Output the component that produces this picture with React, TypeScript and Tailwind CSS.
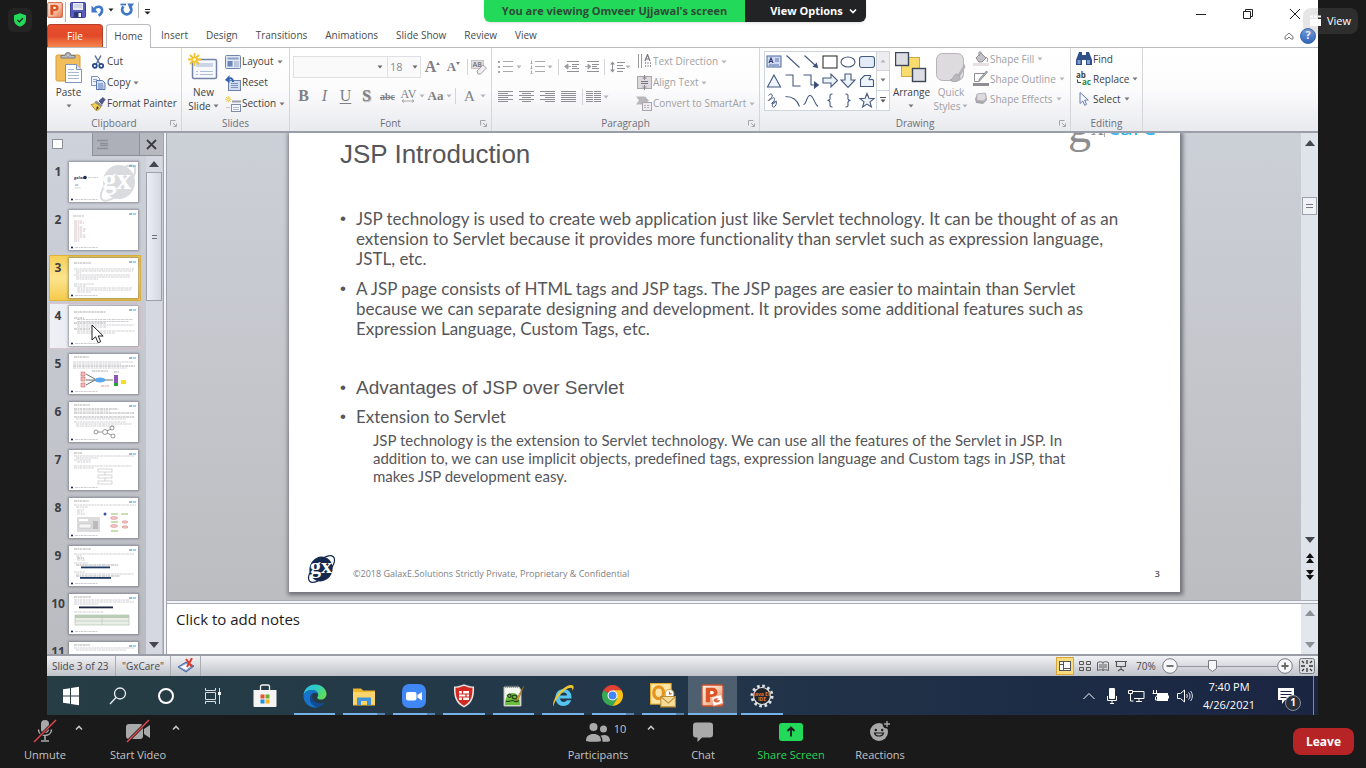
import type { ReactNode } from "react";

/* ---------- small shared pieces ---------- */

function Caret({ className = "text-[#777]" }: { className?: string }) {
  return (
    <svg width="6" height="4" viewBox="0 0 6 4" className={"shrink-0 " + className} aria-hidden="true">
      <path d="M0.5 0.5h5L3 3.5z" fill="currentColor" />
    </svg>
  );
}

function Chevron({ up = false }: { up?: boolean }) {
  return (
    <svg width="8" height="6" viewBox="0 0 8 6" fill="none" stroke="currentColor" strokeWidth="1.6" aria-hidden="true">
      <path d={up ? "M1 4.5L4 1.5L7 4.5" : "M1 1.5L4 4.5L7 1.5"} />
    </svg>
  );
}

function Svg({ w = 16, h = 16, children }: { w?: number; h?: number; children: ReactNode }) {
  return (
    <svg width={w} height={h} viewBox={`0 0 ${w} ${h}`} fill="none" className="shrink-0" aria-hidden="true">
      {children}
    </svg>
  );
}

function Sep({ className = "h-4" }: { className?: string }) {
  return <div className={"w-px shrink-0 bg-[#d4d5d9] " + className} />;
}

/* ---------- title bar ---------- */

const PptIcon = ({ size = 16 }: { size?: number }) => (
  <svg width={size} height={size} viewBox="0 0 24 24" className="shrink-0" aria-hidden="true">
    <defs>
      <linearGradient id="ppt" x1="0" y1="0" x2="1" y2="1">
        <stop offset="0" stopColor="#fdf0e8" />
        <stop offset="0.5" stopColor="#f7c9b0" />
        <stop offset="1" stopColor="#e8754a" />
      </linearGradient>
    </defs>
    <rect x="1" y="1" width="22" height="22" rx="1.5" fill="url(#ppt)" stroke="#c9502c" strokeWidth="1.4" />
    <path d="M5 4h7.5a4.6 4.6 0 0 1 0 9.600H9.600V19H5z" fill="#dc5423" />
    <path d="M9.600 7.200h2a1.700 1.700 0 0 1 0 3.400h-2z" fill="#fff" />
    {size > 16 && (
      <>
        <path d="M11 14l10-3 2 9-10 3z" fill="#fff" stroke="#e9a083" strokeWidth="0.700" />
        <ellipse cx="16.500" cy="17" rx="3.200" ry="2.200" fill="#d9603a" />
        <path d="M16 17l4-3v3z" fill="#fff" />
      </>
    )}
  </svg>
);

function TitleBar() {
  return (
    <div className="flex h-6 shrink-0 items-center bg-white pr-[17px]">
      <div className="flex w-[19px] items-center border-r border-[#b5b5b5] pb-1">
        <PptIcon />
      </div>
      <button aria-label="Save" className="ml-1 mb-1">
        <Svg>
          <rect x="0.500" y="0.500" width="15" height="15" rx="1" fill="#5a5fc0" stroke="#3a3f98" />
          <rect x="3" y="1" width="10" height="7" fill="#e9edf8" />
          <path d="M4 3h8M4 5h8" stroke="#b4bcdc" />
          <rect x="4" y="10" width="8" height="5.500" fill="#303a78" />
          <rect x="8.500" y="11" width="2.500" height="4" fill="#f4f6fc" />
        </Svg>
      </button>
      <button aria-label="Undo" className="ml-[5px] mb-1">
        <Svg w={14} h={14}>
          <path d="M3 6.500C6 2 12 3.500 11 8c-.3 2-1.500 3.500-3.500 4.500" stroke="#3f78c8" strokeWidth="2.600" />
          <path d="M0.500 2.500v7H7z" fill="#3f78c8" />
        </Svg>
      </button>
      <span className="ml-[3px] mb-1"><Caret className="text-[#222]" /></span>
      <button aria-label="Redo" className="ml-[6px] mb-1">
        <Svg w={14} h={14}>
          <path d="M3.500 3.500A4.600 4.600 0 1 0 10.500 4" stroke="#3f78c8" strokeWidth="2.800" />
          <path d="M7.500 0.500h6.500l-4 6z" fill="#3f78c8" />
          <path d="M0.500 1.500h5.500" stroke="#3f78c8" strokeWidth="1.800" />
        </Svg>
      </button>
      <div className="ml-1 mb-1 h-4 w-px bg-[#b5b5b5]" />
      <button aria-label="Customize toolbar" className="ml-[5px]">
        <Svg w={7} h={6}><path d="M1 0.500h5" stroke="#222" /><path d="M0.500 2.500h6L3.500 5.500z" fill="#222" /></Svg>
      </button>
      <div className="ml-auto flex items-center gap-[35px] pt-1">
        <button aria-label="Minimize"><Svg w={12} h={12}><path d="M1 6.500h10" stroke="#222" /></Svg></button>
        <button aria-label="Restore"><Svg w={12} h={12}><path d="M1.500 3.500h7v7h-7zM3.500 3.500v-2h7v7h-2" stroke="#222" /></Svg></button>
        <button aria-label="Close"><Svg w={12} h={12}><path d="M1 1l10 10M11 1L1 11" stroke="#222" /></Svg></button>
      </div>
    </div>
  );
}

const TABS = ["Insert", "Design", "Transitions", "Animations", "Slide Show", "Review", "View"];

function TabBar() {
  return (
    <nav className="flex h-6 shrink-0 items-stretch border-b border-[#b9bbc0] bg-white text-[10px] text-[#4a4a4a]">
      <button className="w-14 rounded-t-sm border border-b-0 border-[#b7402a] bg-gradient-to-b from-[#e8502e] via-[#e2492a] to-[#f4854c] text-white">
        File
      </button>
      <button className="-mb-px ml-[3px] w-[45px] rounded-t-sm border border-b-0 border-[#b9bbc0] bg-white">Home</button>
      <div className="ml-[10px] flex items-center gap-[18px]">
        {TABS.map((t) => (
          <button key={t}>{t}</button>
        ))}
      </div>
      <div className="ml-auto flex items-center gap-[6px] pr-[2px]">
        <button aria-label="Collapse ribbon">
          <Svg w={10} h={8}><path d="M1 4.500L5 1l4 3.500V7H7L5 5 3 7H1z" stroke="#777" /></Svg>
        </button>
        <button aria-label="Help" className="flex size-4 items-center justify-center rounded-full border border-[#2f5fa8] bg-gradient-to-b from-[#6d9ae0] to-[#3565b8] text-[11px] font-bold text-white">
          ?
        </button>
      </div>
    </nav>
  );
}

/* ---------- ribbon ---------- */

function Launcher() {
  return (
    <button aria-label="More options" className="absolute right-1 bottom-1">
      <Svg w={7} h={7}><path d="M0.500 5.500v-5h5M3 3l3 3M6.500 3.500v3h-3" stroke="#a4a6ab" /></Svg>
    </button>
  );
}

function Group({ label, className, launcher = true, children }: { label: string; className: string; launcher?: boolean; children: ReactNode }) {
  return (
    <section className={"relative flex shrink-0 flex-col border-r border-[#d5d6da] " + className}>
      <div className="flex min-h-0 flex-1">{children}</div>
      <h2 className="h-4 text-center text-[10px] leading-4 text-[#6c6f78]">{label}</h2>
      {launcher && <Launcher />}
    </section>
  );
}

function Row({ icon, label, caret = false, off = false }: { icon: ReactNode; label: string; caret?: boolean; off?: boolean }) {
  return (
    <button className={"flex items-center gap-px whitespace-nowrap " + (off ? "text-[#a0a0a3]" : "text-[#3f3f42]")}>
      <span className="flex w-4 justify-center">{icon}</span>
      <span>{label}</span>
      {caret && <span className="ml-[2px]"><Caret className={off ? "text-[#b5b5b8]" : "text-[#777]"} /></span>}
    </button>
  );
}

const PasteIcon = () => (
  <Svg w={28} h={32}>
    <rect x="1" y="3" width="24" height="26" rx="1.500" fill="#f2be5c" stroke="#d79c3c" />
    <path d="M6 6V3.500h4a3 3 0 0 1 6 0h4V6z" fill="#b9bcc2" stroke="#777b84" />
    <circle cx="13" cy="3" r="1.300" fill="#fff" stroke="#777b84" strokeWidth="0.700" />
    <path d="M10.500 12.500h11l5 5v13h-16z" fill="#fff" stroke="#7f93b8" />
    <path d="M21.500 12.500v5h5" fill="#dbe3f0" stroke="#7f93b8" />
    <path d="M13 17.500h6M13 20.500h11M13 23.500h11M13 26.500h11" stroke="#a9b7d2" />
  </Svg>
);
const CutIcon = () => (
  <Svg w={14} h={14}>
    <path d="M4 0.500L8.800 9M10 0.500L5.200 9" stroke="#5a6f98" strokeWidth="1.500" />
    <circle cx="3.800" cy="10.800" r="2" stroke="#27488f" strokeWidth="1.700" />
    <circle cx="10.200" cy="10.800" r="2" stroke="#27488f" strokeWidth="1.700" />
  </Svg>
);
const CopyIcon = () => (
  <Svg w={16} h={14}>
    <path d="M1.500 0.500h6l2 2v7h-8z" fill="#f0f5fd" stroke="#7d93bf" />
    <path d="M3 3.500h4M3 5.500h5" stroke="#8fa6d0" />
    <path d="M6.500 4.500h6l2.500 2.500v6.500H6.500z" fill="#d4e2f8" stroke="#5877b0" />
    <path d="M8 8h5M8 10h5.500M8 12h5.500" stroke="#5877b0" />
  </Svg>
);
const PainterIcon = () => (
  <Svg w={16} h={14}>
    <path d="M9 4l4-3.500 2 2L12 7z" fill="#53588a" stroke="#33375f" strokeWidth="0.700" />
    <path d="M6 3.500l7 4.500-2 2-6.500-4z" fill="#8a8fa6" />
    <path d="M5 5.500l6 4.500c-1 2-3 3.500-5 3.500L1 7.500C2.500 7.500 4 7 5 5.500z" fill="#f4cf55" stroke="#a58529" strokeWidth="0.800" />
    <path d="M7 9l2 2-3 2z" fill="#3f3a2a" />
  </Svg>
);
const Spark = () => (
  <g stroke="#f0c22e" strokeWidth="1.800"><path d="M6.500 0v13M0 6.500h13M2 2l9 9M11 2l-9 9" /><circle cx="6.500" cy="6.500" r="1.600" fill="#fff6c8" stroke="none" /></g>
);
const NewSlideIcon = () => (
  <Svg w={30} h={28}>
    <rect x="4.500" y="6.500" width="24" height="19" rx="1.500" fill="#f7f9fd" stroke="#7484a8" strokeWidth="1.500" />
    <rect x="8" y="10" width="17" height="4" fill="#ccd5e8" />
    <path d="M8 18.500h2M12 18.500h13M8 21.500h2M12 21.500h13" stroke="#b0bbd4" />
    <Spark />
  </Svg>
);
const LayoutIcon = () => (
  <Svg w={16} h={14}>
    <rect x="0.500" y="0.500" width="15" height="13" rx="1" fill="#dfe7f5" stroke="#7484a8" />
    <rect x="2.500" y="2.500" width="11" height="2" fill="#8da0c6" />
    <rect x="2.500" y="6" width="5" height="5.500" fill="#6b86bb" />
    <path d="M9 7h5M9 9h5M9 11h5" stroke="#97a6c6" />
  </Svg>
);
const ResetIcon = () => (
  <Svg w={16} h={16}>
    <rect x="3.500" y="5.500" width="12" height="10" fill="#cfdbf0" stroke="#6f82ab" />
    <path d="M6 8.500h7M6 10.500h7M6 12.500h7" stroke="#7f93bd" />
    <path d="M8 7C8 3 5 2.500 3.500 4" stroke="#2f63b5" strokeWidth="2" />
    <path d="M0 5l4.500-5v8z" fill="#2f63b5" />
  </Svg>
);
const SectionIcon = () => (
  <Svg w={16} h={16}>
    <g transform="scale(0.500)"><Spark /></g>
    <path d="M7 5.500h9" stroke="#9aa0ad" strokeWidth="2" />
    <rect x="6.500" y="8.500" width="9" height="7" fill="#f4f6fb" stroke="#7f8cab" />
    <path d="M8 11.500h6M8 13.500h6" stroke="#b0bbd4" />
    <path d="M1 11.500h4" stroke="#c2c6cf" />
  </Svg>
);

function BigButton({ icon, lines, off = false, caretBelow = false }: { icon: ReactNode; lines: string[]; off?: boolean; caretBelow?: boolean }) {
  return (
    <button className={"flex flex-col items-center pt-1 leading-[14px] " + (off ? "text-[#a0a0a3]" : "text-[#3f3f42]")}>
      <span className="flex h-8 items-start">{icon}</span>
      <span className="mt-px">{lines[0]}</span>
      {caretBelow ? (
        <span className="flex h-[14px] items-center"><Caret /></span>
      ) : (
        <span className="flex items-center gap-[2px]">{lines[1]}<Caret className={off ? "text-[#b5b5b8]" : "text-[#777]"} /></span>
      )}
    </button>
  );
}

function Lines({ rows, w = 14 }: { rows: [number, number][]; w?: number }) {
  return (
    <Svg w={w} h={12}>
      {rows.map(([a, b], i) => (
        <path key={i} d={`M${a} ${i * 2 + 0.5}H${b}`} stroke="#8f8f94" />
      ))}
    </Svg>
  );
}

const BulletsIcon = ({ num = false }: { num?: boolean }) => (
  <Svg w={15} h={14}>
    {[2, 7, 12].map((y) => (
      <g key={y}>
        {num ? <path d={`M1.500 ${y - 1.5}v3M0.500 ${y + 1.5}h2`} stroke="#a8a8ad" /> : <rect x="0" y={y - 1} width="2" height="2" fill="#a8a8ad" />}
        <path d={`M5 ${y - 0.5}h10`} stroke="#a8a8ad" />
      </g>
    ))}
  </Svg>
);
const IndentIcon = ({ flip = false }: { flip?: boolean }) => (
  <Svg w={15} h={12}>
    <path d="M3 0.500h12M8 3.500h7M8 5.500h5M8 7.500h7M3 10.500h12" stroke="#8f8f94" />
    <path d={flip ? "M1 5.500h3M4 3v5l3-2.500z" : "M7 5.500H4M4 3v5L0.500 5.500z"} stroke="#9b9ba0" fill="#9b9ba0" strokeWidth="0.800" />
  </Svg>
);
const SpacingIcon = () => (
  <Svg w={15} h={12}>
    <path d="M2.500 2v8" stroke="#8f8f94" />
    <path d="M0 3.500L2.500 0.500L5 3.500zM0 8.500L2.500 11.500L5 8.500z" fill="#8f8f94" />
    <path d="M7 1.500h8M7 4.500h6M7 7.500h8M7 10.500h6" stroke="#8f8f94" />
  </Svg>
);
const TextDirIcon = () => (
  <Svg w={15} h={15}>
    <path d="M1.500 0v14M4.500 0v14" stroke="#9a9a9e" />
    <path d="M8 7l2.500-6.500L13 7M9 5h3" stroke="#77777b" strokeWidth="1.200" />
    <path d="M8.500 8v6M11 8v6M13.500 8v6" stroke="#9a9a9e" strokeDasharray="2 1" />
  </Svg>
);
const AlignTextIcon = () => (
  <Svg w={15} h={15}>
    <rect x="0.500" y="1.500" width="14" height="12" fill="#ded9de" stroke="#aaa6ab" />
    <path d="M4 6.500h7M4 8.500h7" stroke="#77757a" />
    <path d="M7.500 0v5M7.500 10v5M5.500 3h4M5.500 12h4" stroke="#8b898e" />
  </Svg>
);
const SmartArtIcon = () => (
  <Svg w={16} h={15}>
    <path d="M0 0.500h9l4 4-4 4H0l3-4z" fill="#b9b7bb" />
    <rect x="6.500" y="6.500" width="9" height="8" fill="#eceaed" stroke="#a9a6ab" />
    <path d="M8 9.500h6M8 11.500h6" stroke="#b5b3b8" strokeDasharray="2 1" />
  </Svg>
);

const SHAPES: ReactNode[] = [
  <><rect x="0.500" y="2.500" width="14" height="11" fill="#cfdaf0" stroke="#5d74a8" /><path d="M2.500 9.500l2-5 2 5M3.500 8h2" stroke="#27386b" /><path d="M8.500 5.500h4M8.500 7.500h4M2.500 11.500h10" stroke="#5d74a8" /></>,
  <path d="M1 2l13 12" />,
  <><path d="M1 2l12 11" /><path d="M14 14l-4-1 3-3z" fill="#2b4470" /></>,
  <rect x="0.500" y="2.500" width="14" height="12" fill="#fff" stroke="#333" />,
  <ellipse cx="7.500" cy="8.500" rx="7" ry="5" fill="#fff" />,
  <rect x="0" y="3" width="15" height="11" rx="2.500" fill="#e2ebf7" />,
  <path d="M7.500 2.500l6.500 12H1z" fill="#eef4fb" />,
  <path d="M0 2.500h7.500v11H15" />,
  <><path d="M0 2.500h7.500v10H13" /><path d="M11 9.500l4 3-4 3z" fill="#2b4470" /></>,
  <path d="M0.500 5.500h8v-4l6.500 6.500-6.500 6.500v-4h-8z" fill="#eef4fb" />,
  <path d="M4.500 1.500h6v6h4L7.500 15 0.500 7.500h4z" fill="#eef4fb" />,
  <path d="M1 14V7l4-4h6c1 2-2 2-1.500 4 1.500 1 3-1.500 4.500 1v6z" fill="#eef4fb" />,
  <path d="M2 3c4-4 5 1 2 3s-3 3 0 1 4-3 4 0-5 4-2 4 4-4 4-1-3 6-4 4 1-5 4-5" strokeWidth="1" />,
  <path d="M0 4c8 0 12 4 14 10" />,
  <path d="M0 12c3 0 3-9 6.500-9s4 8 8 11" />,
  <path d="M10 1.500c-4 0-2 3-2.500 5-.3 1-1.500 1.500-2.500 1.500 1 0 2.200.5 2.500 1.500.5 2-1.500 5 2.500 5" />,
  <path d="M5 1.500c4 0 2 3 2.500 5 .3 1 1.500 1.500 2.500 1.500-1 0-2.200.5-2.500 1.500-.5 2 1.500 5-2.500 5" />,
  <path d="M7.500 1l1.900 4.800 5.100.3-4 3.300 1.400 5-4.400-2.800-4.400 2.800 1.400-5-4-3.300 5.100-.3z" fill="#eef4fb" />,
];

const ArrangeIcon = () => (
  <Svg w={32} h={32}>
    <rect x="6.500" y="5.500" width="18" height="19" fill="#f8dd6e" stroke="#d1a83e" />
    <rect x="0.500" y="0.500" width="13" height="13" fill="#dcdee3" stroke="#3c4458" strokeWidth="1.400" />
    <rect x="17.500" y="16.500" width="13" height="13" fill="#dcdee3" stroke="#3c4458" strokeWidth="1.400" />
  </Svg>
);
const QuickStylesIcon = () => (
  <Svg w={30} h={32}>
    <rect x="0.500" y="1.500" width="27" height="27" rx="6" fill="#dedbdf" stroke="#b6b3b8" />
    <path d="M28.500 12l-7 11 2 2 6-10z" fill="#b5b2b7" />
    <path d="M21 22c-4 0-3 5-7 6 3 3 10 2 10-3z" fill="#bbb8bd" stroke="#aaa7ac" />
  </Svg>
);
const FillIcon = () => (
  <Svg><path d="M3 7l5-5 5 5-4 4H6z" fill="#c3c1c6" stroke="#8f8d92" /><path d="M6 5V1h2v2M13 6c2 1 2 3 1 5" stroke="#8f8d92" /><rect x="0" y="12" width="16" height="3" fill="#e6e0e5" /></Svg>
);
const OutlineIcon = () => (
  <Svg><path d="M12 2.500H1.500v8H5" stroke="#8f8d92" /><path d="M14.500 1l-7 8-2 2 1-3 7-8z" fill="#bbb" stroke="#8f8d92" /><rect x="0" y="12" width="16" height="3" fill="#8f8d92" /></Svg>
);
const EffectsIcon = () => (
  <Svg><path d="M2 8l2-5 9-1 1 7-4 4-7-1z" fill="#a9a6ab" /><path d="M4 3l8-1 1 5-2 3-7-1z" fill="#dedbdf" stroke="#bcb9be" /></Svg>
);
const FindIcon = () => (
  <Svg><path d="M3 1h3v3h4V1h3l3 8v5h-6V9H6v5H0V9z" fill="#2f5088" /><path d="M1.500 9h3v4h-3zM11 9h3v4h-3z" fill="#7f9dd0" /></Svg>
);
const ReplaceIcon = () => (
  <Svg>
    <text x="0" y="7" fontSize="8" fontWeight="bold" fill="#444">ab</text>
    <text x="6" y="14" fontSize="8" fontWeight="bold" fill="#2f8a3a">ac</text>
    <path d="M1.500 8.500v3H5" stroke="#444" />
  </Svg>
);
const SelectIcon = () => (
  <Svg w={12} h={14}><path d="M2 0.500v11l2.800-2.500 1.900 4.300 1.900-.9-1.900-4.200 3.600-.2z" fill="#f4f7fd" stroke="#6a7fb0" /></Svg>
);

function Glyph({ children, size = "text-[16px]", className = "" }: { children: ReactNode; size?: string; className?: string }) {
  return (
    <button className={"flex w-[21px] shrink-0 items-center justify-center font-['Liberation_Serif',serif] text-[#808085] " + size + " " + className}>{children}</button>
  );
}

function Ribbon() {
  const light = "text-[#b5b5b8]";
  return (
    <div className="flex h-[85px] shrink-0 border-b-2 border-[#9a9ea8] bg-gradient-to-b from-white via-[#fcfcfd] to-[#e9eaee] text-[10px]">
      <Group label="Clipboard" className="w-[135px]">
        <div className="flex w-[43px] justify-center"><BigButton icon={<PasteIcon />} lines={["Paste"]} caretBelow /></div>
        <div className="grid grid-rows-3 pt-[3px] pb-px">
          <Row icon={<CutIcon />} label="Cut" />
          <Row icon={<CopyIcon />} label="Copy" caret />
          <Row icon={<PainterIcon />} label="Format Painter" />
        </div>
      </Group>
      <Group label="Slides" className="w-[108px]" launcher={false}>
        <div className="flex w-[43px] justify-center"><BigButton icon={<span className="pt-px"><NewSlideIcon /></span>} lines={["New", "Slide"]} /></div>
        <div className="grid grid-rows-3 pt-[3px] pb-px">
          <Row icon={<LayoutIcon />} label="Layout" caret />
          <Row icon={<ResetIcon />} label="Reset" />
          <Row icon={<SectionIcon />} label="Section" caret />
        </div>
      </Group>
      <Group label="Font" className="w-[202px]">
        <div className="flex w-full flex-col gap-2 pt-2 pl-[3px]">
          <div className="flex h-[22px] items-center">
            <div className="flex h-[22px] w-[95px] items-center justify-end border border-[#e0e0e4] bg-[#fafafb] pr-1"><Caret className="text-[#666]" /></div>
            <div className="-ml-px flex h-[22px] w-[34px] items-center justify-between border border-[#e0e0e4] bg-[#fafafb] px-[2px] text-[11px] text-[#8a8a8e]">18<Caret className="text-[#666]" /></div>
            <Glyph className="ml-px font-bold">A<span className="-mt-2"><svg width="4" height="3" viewBox="0 0 4 3"><path d="M0 3h4L2 0z" fill="#808085" /></svg></span></Glyph>
            <Glyph size="text-[13px]" className="font-bold">A<span className="-mt-2"><svg width="4" height="3" viewBox="0 0 4 3"><path d="M0 0h4L2 3z" fill="#808085" /></svg></span></Glyph>
            <Sep className="mx-[3px] h-4" />
            <button aria-label="Clear formatting">
              <Svg>
                <rect x="0.500" y="1.500" width="12" height="8" fill="#e3e0e5" stroke="#c6c3c8" />
                <text x="1.500" y="8" fontSize="7" fontWeight="bold" fill="#808085">AB</text>
                <path d="M6 12l6-6 3.500 3-6 6H7z" fill="#f1eef2" stroke="#a5a2a7" />
              </Svg>
            </button>
          </div>
          <div className="flex h-5 items-center">
            <Glyph className="font-bold">B</Glyph>
            <Glyph className="italic">I</Glyph>
            <Glyph className="underline underline-offset-2">U</Glyph>
            <Glyph className="font-bold [text-shadow:1px_1px_1px_#aaa]">S</Glyph>
            <Glyph size="text-[10px]" className="font-bold line-through">abc</Glyph>
            <Glyph size="text-[12px]">
              <span className="flex flex-col items-center leading-[9px]">AV<Svg w={14} h={4}><path d="M1 2h12M3 0.500L1 2l2 1.500M11 0.500L13 2l-2 1.500" stroke="#999" strokeWidth="0.800" /></Svg></span>
            </Glyph>
            <Caret className={light} />
            <Glyph size="text-[13px]" className="font-bold">Aa</Glyph>
            <Caret className={light} />
            <Sep className="mx-[3px] h-4" />
            <Glyph size="text-[15px]">A</Glyph>
            <Caret className={light} />
          </div>
        </div>
      </Group>
      <Group label="Paragraph" className="w-[268px]">
        <div className="flex w-[144px] flex-col gap-[16px] pt-3 pl-[6px]">
          <div className="flex h-[14px] items-center">
            <button aria-label="Bullets"><BulletsIcon /></button>
            <span className="mr-2 ml-[3px]"><Caret className={light} /></span>
            <button aria-label="Numbering"><BulletsIcon num /></button>
            <span className="ml-[2px]"><Caret className={light} /></span>
            <Sep className="mx-[5px] h-4" />
            <button aria-label="Decrease indent" className="mr-[5px]"><IndentIcon /></button>
            <button aria-label="Increase indent"><IndentIcon flip /></button>
            <Sep className="mx-[5px] h-4" />
            <button aria-label="Line spacing"><SpacingIcon /></button>
            <Caret className={light} />
          </div>
          <div className="flex h-[14px] items-center gap-[6px]">
            <button aria-label="Align left"><Lines w={15} rows={[[0, 15], [0, 10], [0, 15], [0, 10], [0, 15], [0, 10]]} /></button>
            <button aria-label="Center"><Lines w={15} rows={[[0, 15], [3, 12], [0, 15], [3, 12], [0, 15], [3, 12]]} /></button>
            <button aria-label="Align right"><Lines w={15} rows={[[0, 15], [5, 15], [0, 15], [5, 15], [0, 15], [5, 15]]} /></button>
            <button aria-label="Justify"><Lines w={15} rows={[[0, 15], [0, 15], [0, 15], [0, 15], [0, 15], [0, 15]]} /></button>
            <Sep />
            <button aria-label="Columns" className="-ml-[3px] flex gap-px"><Lines w={7} rows={[[0, 7], [0, 7], [0, 7], [0, 7], [0, 7], [0, 7]]} /><Lines w={7} rows={[[0, 7], [0, 7], [0, 7], [0, 7], [0, 7], [0, 7]]} /></button>
            <span className="-ml-1"><Caret className={light} /></span>
          </div>
        </div>
        <div className="grid grid-rows-3 pt-[3px] pb-px">
          <Row off icon={<TextDirIcon />} label="Text Direction" caret />
          <Row off icon={<AlignTextIcon />} label="Align Text" caret />
          <Row off icon={<SmartArtIcon />} label="Convert to SmartArt" caret />
        </div>
      </Group>
      <Group label="Drawing" className="w-[311px]">
        <div className="mt-[3px] ml-1 flex h-[60px] border border-[#cfd3da] bg-white">
          <div className="grid w-[111px] grid-cols-6 grid-rows-3 place-items-center">
            {SHAPES.map((s, i) => (
              <button key={i} aria-label={`Shape ${i + 1}`}>
                <svg width="16" height="17" viewBox="-0.500 0 16 16" fill="none" stroke="#44597f" strokeWidth="1.100" aria-hidden="true">{s}</svg>
              </button>
            ))}
          </div>
          <div className="grid w-[13px] grid-rows-3 divide-y divide-[#cfd3da] border-l border-[#cfd3da]">
            <button aria-label="Previous shapes" className="flex items-center justify-center bg-[#ededf0]"><span className="rotate-180"><Caret className={light} /></span></button>
            <button aria-label="Next shapes" className="flex items-center justify-center"><Caret /></button>
            <button aria-label="All shapes" className="flex flex-col items-center justify-center gap-px"><span className="h-px w-[6px] bg-[#555]" /><Caret className="text-[#555]" /></button>
          </div>
        </div>
        <div className="flex w-[43px] justify-center"><BigButton icon={<ArrangeIcon />} lines={["Arrange"]} caretBelow /></div>
        <div className="flex w-9 justify-center"><BigButton off icon={<QuickStylesIcon />} lines={["Quick", "Styles"]} /></div>
        <div className="ml-1 grid grid-rows-3 pt-px pb-[6px]">
          <Row off icon={<FillIcon />} label="Shape Fill" caret />
          <Row off icon={<OutlineIcon />} label="Shape Outline" caret />
          <Row off icon={<EffectsIcon />} label="Shape Effects" caret />
        </div>
      </Group>
      <Group label="Editing" className="w-[72px]" launcher={false}>
        <div className="ml-[5px] grid grid-rows-3 pt-px pb-[6px]">
          <Row icon={<FindIcon />} label="Find" />
          <Row icon={<ReplaceIcon />} label="Replace" caret />
          <Row icon={<SelectIcon />} label="Select" caret />
        </div>
      </Group>
    </div>
  );
}

/* ---------- slide thumbnails ---------- */

type Line = [number, number, number, string?];
const G = "#b9b9be";
const D = "#86868b";

function TextLines({ lines }: { lines: Line[] }) {
  return (
    <g strokeDasharray="3 0.600 1.500 0.500 2.400 0.700">
      {lines.map(([x, y, w, c], i) => (
        <path key={i} d={`M${x} ${y}h${w}`} stroke={c ?? G} strokeWidth="0.700" />
      ))}
    </g>
  );
}

const THUMBS: ReactNode[] = [
  <>
    <ellipse cx="50" cy="20" rx="16" ry="17" fill="#dadbdf" />
    <ellipse cx="49" cy="21" rx="23" ry="9" fill="none" stroke="#dadbdf" strokeWidth="2" transform="rotate(-46 49 21)" />
    <text x="33" y="27" fontSize="29" fontWeight="bold" fill="#fff" fontFamily="Liberation Serif">gx</text>
    <text x="5" y="17" fontSize="4" fontWeight="bold" fill="#35406b">galax</text>
    <circle cx="16" cy="15.500" r="1.800" fill="#1e2b5c" />
    <TextLines lines={[[19, 15.5, 10], [6, 23, 4, "#4d6fae"], [6, 26, 6]]} />
  </>,
  <TextLines lines={[[4, 6, 11, "#9a9aa0"], ...[11, 13, 15, 17, 19, 21, 23, 25, 27, 29, 31].map((y, i): Line => [5, y, [9, 10, 5, 9, 12, 11, 8, 11, 12, 6, 5][i], "#c9aeb6"])]} />,
  <TextLines lines={[[5, 5, 17, D], [5, 11, 60], [7, 13, 57], [7, 15, 5], [5, 17, 56], [7, 19, 54], [7, 21, 22], [5, 26, 20], [5, 28, 12], [8, 30, 55], [8, 32, 54], [8, 34, 14]]} />,
  <TextLines lines={[[5, 6, 32, D], [5, 12, 10, D], [8, 13.5, 56], [8, 15.5, 52], [5, 17, 32, D], [8, 19, 57], [8, 21, 30], [5, 23, 16, D], [8, 25, 58], [8, 27, 38]]} />,
  <>
    <TextLines lines={[[5, 3, 15, D], [4, 8, 60], [4, 10, 48], [4, 12, 62, D], [4, 14, 54]]} />
    <g fill="#f3b9b9" stroke="#c05a5a" strokeWidth="0.500"><rect x="12" y="18" width="4" height="4" /><rect x="12" y="23" width="4" height="4" /><rect x="12" y="29" width="4" height="4" /></g>
    <path d="M17 20l9 5M17 26h9M17 31l9-5M36 26h8" stroke="#333" strokeWidth="0.700" />
    <ellipse cx="31" cy="26" rx="5.500" ry="2.600" fill="#5aa9ee" />
    <rect x="45" y="21" width="4" height="8" fill="#8d55b5" /><rect x="45" y="29" width="4" height="3" fill="#22a830" /><rect x="52" y="26" width="5" height="4" fill="#f2e01e" />
    <TextLines lines={[[23, 17, 16, D], [32, 32, 8, "#d26a6a"], [45, 18, 5, D]]} />
  </>,
  <>
    <TextLines lines={[[5, 3, 16, D], [5, 7, 44, D], [5, 9, 36], [5, 11, 60, D], [5, 15, 61, D], [7, 17, 50], [5, 20, 52], [7, 22, 56], [7, 24, 40]]} />
    <g fill="none" stroke="#555" strokeWidth="0.600"><circle cx="27" cy="30" r="2" /><circle cx="36" cy="30" r="2.500" /><circle cx="43" cy="26" r="2" /><circle cx="44" cy="34" r="2" /><path d="M29 30h4M38 29l4-2M38 31l4 2" /></g>
  </>,
  <>
    <TextLines lines={[[5, 3, 8, D], [5, 6, 60], [7, 8, 22], [5, 10, 17], [8, 12, 14], [5, 16, 58], [5, 18, 20]]} />
    <g fill="#fff" stroke="#bbb" strokeWidth="0.600"><rect x="29" y="19" width="14" height="3" /><rect x="29" y="25" width="14" height="3" /><rect x="29" y="31" width="14" height="3" /><path d="M36 22v3M36 28v3" /></g>
  </>,
  <>
    <TextLines lines={[[5, 3, 15, D], [5, 7, 62], [7, 9, 12], [8, 12, 7], [8, 14, 6], [8, 16, 8]]} />
    <rect x="8" y="19" width="23" height="15" fill="#dcdcde" /><rect x="10" y="21" width="9" height="2" fill="#fff" /><rect x="10" y="26" width="12" height="4" fill="#f6f6f6" stroke="#aaa" strokeWidth="0.400" /><rect x="24" y="23" width="5" height="8" fill="#bbb" />
    <circle cx="36" cy="16" r="1.500" fill="#3d4fa8" />
    <g fill="#f3c9c9" stroke="#cf7777" strokeWidth="0.500"><ellipse cx="45" cy="20" rx="3.500" ry="1.400" /><ellipse cx="45" cy="28" rx="3.500" ry="1.400" /><ellipse cx="56" cy="24" rx="3" ry="1.200" /><ellipse cx="56" cy="29" rx="3" ry="1.200" /></g>
    <g stroke="#8ab354" strokeWidth="0.900"><path d="M42 16h7M52 16h7M42 24h7M42 33h7" /></g>
  </>,
  <>
    <TextLines lines={[[5, 3, 17, D], [5, 8, 60], [7, 10, 6], [8, 12, 7, D], [8, 14, 8], [5, 17, 14], [7, 19, 42, D], [5, 26, 11], [7, 28, 58], [7, 30, 44, D]]} />
    <rect x="12" y="20.500" width="29" height="1.800" fill="#1f3864" /><rect x="11" y="31" width="31" height="1.800" fill="#1f3864" />
  </>,
  <>
    <TextLines lines={[[5, 3, 17, D], [5, 6, 56], [5, 8, 60], [5, 10, 24], [5, 18, 30]]} />
    <rect x="10" y="12.500" width="34" height="1.800" fill="#1a2440" />
    <rect x="6" y="21" width="54" height="10" fill="#e9efe7" stroke="#a9bba6" strokeWidth="0.600" /><rect x="6" y="21" width="54" height="3" fill="#b9ccb6" /><path d="M33 21v10M6 27h54" stroke="#a9bba6" strokeWidth="0.500" />
  </>,
  <TextLines lines={[[5, 3, 16, D], [5, 6, 60], [7, 8, 50]]} />,
];

function Thumbnails() {
  return (
    <aside className="flex w-[116px] shrink-0 flex-col bg-gradient-to-b from-[#ced2da] to-[#b9bbc0]">
      <div className="flex h-[23px] shrink-0 items-stretch">
        <button aria-label="Slides" className="flex w-[45px] items-center pl-[5px]">
          <Svg w={12} h={11}><rect x="0.500" y="0.500" width="10" height="9" fill="#fff" stroke="#8d9098" /></Svg>
        </button>
        <button aria-label="Outline" className="flex w-[47px] items-center border-b border-l border-[#8d9098] bg-[#adb0b8] pl-1">
          <Svg w={12} h={11}><path d="M0 1.500h11M3 4.500h8M3 6.500h8M0 9.500h11" stroke="#8d9098" strokeWidth="1.400" /></Svg>
        </button>
        <button aria-label="Close pane" className="flex flex-1 items-center justify-center border-b border-l border-[#8d9098] bg-[#b6b9c0]">
          <Svg w={11} h={11}><path d="M1 1l9 9M10 1l-9 9" stroke="#3a3c42" strokeWidth="1.800" /></Svg>
        </button>
      </div>
      <div className="flex min-h-0 flex-1 pr-px">
        <ol className="min-w-0 flex-1 overflow-hidden pt-[2px] pr-[5px] pl-[2px]">
          {THUMBS.map((t, i) => (
            <li key={i} className="flex h-12 items-center">
              <button
                className={
                  "relative flex h-[46px] w-full items-center border pl-px " +
                  (i === 2
                    ? "border-[#e0b23a] bg-gradient-to-b from-[#f6cf58] via-[#fbe48c] to-[#f5cb4a]"
                    : i === 3
                      ? "border-[#d9c3cc] bg-gradient-to-r from-[#eff0f5] to-[#dcdde4]"
                      : "border-transparent")
                }
              >
                <span className="mr-1 mb-5 w-[14px] shrink-0 text-center text-[12px] leading-3 font-bold text-[#3d3f45]">{i + 1}</span>
                <span className="h-10 w-[69px] shrink-0 overflow-hidden bg-white shadow-[0_0_2px_1px_rgba(90,90,100,0.550)]">
                  <svg width="69" height="40" viewBox="0 0 69 40" aria-hidden="true">
                    {t}
                    <path d="M60 4h3" stroke="#999" strokeWidth="1.500" /><path d="M63.500 4h3.500" stroke="#58bdea" strokeWidth="1.200" />
                    <circle cx="3" cy="37.500" r="1.100" fill="#1e2b5c" />
                    <TextLines lines={[[6, 37.5, 23]]} />
                  </svg>
                </span>
                {i === 3 && (
                  <svg width="14" height="21" viewBox="0 0 14 21" className="absolute top-[20px] left-[41px]" aria-hidden="true">
                    <path d="M1 1v15l3.600-3.200 2.500 6 2.600-1.100-2.500-5.700h5z" fill="#fff" stroke="#222" />
                  </svg>
                )}
              </button>
            </li>
          ))}
        </ol>
        <div className="flex w-4 shrink-0 flex-col items-center bg-[#d5d8e0]">
          <span className="flex h-4 items-center"><Arrow up /></span>
          <div className="flex h-[129px] w-full items-center justify-center border border-[#9da1ab] bg-gradient-to-r from-[#eceef4] to-[#d4d8e2]">
            <span className="h-1 w-[5px] border-y border-[#6d7079]" />
          </div>
          <span className="mt-auto flex h-[18px] items-center"><Arrow /></span>
        </div>
      </div>
    </aside>
  );
}

/* ---------- slide ---------- */

function Bullet({ className = "", children }: { className?: string; children: ReactNode }) {
  return (
    <li className={"flex whitespace-nowrap " + className}>
      <span className="w-4 shrink-0 font-['Liberation_Sans',sans-serif]">•</span>
      <div>{children}</div>
    </li>
  );
}

const GxLogo = () => (
  <svg width="30" height="28" viewBox="0 0 30 28" aria-hidden="true">
    <ellipse cx="14" cy="14" rx="11.500" ry="12.500" fill="#15294f" transform="rotate(20 14 14)" />
    <ellipse cx="14.500" cy="14" rx="17" ry="7.500" fill="none" stroke="#15294f" strokeWidth="1.200" transform="rotate(-46 14.500 14)" />
    <text x="3" y="18" fontSize="22" fontWeight="bold" fill="#fff" fontFamily="Liberation Serif">gx</text>
  </svg>
);

function Slide() {
  return (
    <article className="relative flex flex-1 flex-col overflow-hidden bg-white pt-[5px] font-[Lato,sans-serif] text-[#56565a] [font-variant-ligatures:none]">
      <svg width="90" height="20" viewBox="0 0 90 20" className="absolute top-0 right-[22px]" aria-hidden="true">
        <text x="0" y="9" fontSize="46" fill="#8d8d90" fontFamily="Liberation Serif">g</text>
        <text x="23" y="2" fontSize="26" fill="#8d8d90" fontFamily="Liberation Serif">x</text>
        <path d="M36.500 0v4" stroke="#a8a8ab" />
        <text x="40" y="2" fontSize="24" fill="#29b3ee" fontFamily="Open Sans">care</text>
      </svg>
      <h1 className="pl-[51px] font-['Liberation_Sans',sans-serif] text-[26px] leading-8">JSP Introduction</h1>
      <ul className="mt-[39px] pl-[51px] text-[17px] leading-5">
        <Bullet>
          JSP technology is used to create web application just like Servlet technology. It can be thought of as an<br />
          extension to Servlet because it provides more functionality than servlet such as expression language,<br />
          JSTL, etc.
        </Bullet>
        <Bullet className="mt-[10px]">
          A JSP page consists of HTML tags and JSP tags. The JSP pages are easier to maintain than Servlet<br />
          because we can separate designing and development. It provides some additional features such as<br />
          Expression Language, Custom Tags, etc.
        </Bullet>
        <Bullet className="mt-[39px]"><span className="font-['Liberation_Sans',sans-serif] text-[19px]">Advantages of JSP over Servlet</span></Bullet>
        <Bullet className="mt-[9px]">Extension to Servlet</Bullet>
      </ul>
      <p className="mt-1 pl-[84px] text-[15px] leading-[18px] whitespace-nowrap">
        JSP technology is the extension to Servlet technology. We can use all the features of the Servlet in JSP. In<br />
        addition to, we can use implicit objects, predefined tags, expression language and Custom tags in JSP, that<br />
        makes JSP development easy.
      </p>
      <footer className="mt-auto flex items-center pr-5 pb-[9px] pl-[18px] font-['Open_Sans',sans-serif] text-[9px] text-[#808084]">
        <GxLogo />
        <span className="ml-4 pt-[10px]">©2018 GalaxE.Solutions Strictly Private, Proprietary &amp; Confidential</span>
        <span className="ml-auto pt-[10px] font-semibold text-[#606064]">3</span>
      </footer>
    </article>
  );
}

function Arrow({ up = false, c = "#45474d" }: { up?: boolean; c?: string }) {
  return (
    <svg width="10" height="6" viewBox="0 0 10 6" aria-hidden="true"><path d={up ? "M0 6h10L5 0z" : "M0 0h10L5 6z"} fill={c} /></svg>
  );
}

function Workspace() {
  return (
    <div className="flex min-h-0 flex-1">
      <Thumbnails />
      <div className="w-1 shrink-0 border-r border-l border-[#a0a3ab] bg-[#f3f4f7]" />
      <div className="flex min-w-0 flex-1 flex-col">
        <div className="flex min-h-0 flex-1 bg-gradient-to-b from-[#ccd0d7] to-[#bcbdc1]">
          <div className="flex min-w-0 flex-1 pr-[121px] pb-2 pl-[122px]">
            <div className="flex min-w-0 flex-1 shadow-[1px_1px_4px_2px_rgba(60,60,70,0.600)] [clip-path:inset(0_-8px_-8px_-8px)]"><Slide /></div>
          </div>
          <div className="flex w-[17px] shrink-0 flex-col items-center bg-[#dfe3ea]">
            <span className="flex h-5 items-center"><Arrow up /></span>
            <span className="mt-11 flex h-[18px] w-[15px] items-center justify-center border border-[#9da1ab] bg-[#f0f2f6]"><span className="h-1 w-[7px] border-y border-[#777a82]" /></span>
            <span className="mt-auto flex h-[18px] items-center"><Arrow /></span>
            <span className="flex h-[18px] items-center"><svg width="8" height="10" viewBox="0 0 8 10"><path d="M0 5h8L4 0zM0 10h8L4 5z" fill="#111" /></svg></span>
            <span className="mb-[17px] flex h-4 items-center"><svg width="8" height="10" viewBox="0 0 8 10"><path d="M0 0h8L4 5zM0 5h8L4 10z" fill="#111" /></svg></span>
          </div>
        </div>
        <div className="h-1 shrink-0 border-y border-[#a9acb4] bg-[#f3f4f7]" />
        <div className="flex h-[50px] shrink-0 bg-white">
          <p className="flex-1 pt-1 pl-[9px] text-[15px] leading-[22px] text-[#1c1c1c]">Click to add notes</p>
          <div className="flex w-[17px] flex-col items-center justify-between bg-[#e3e6ec] py-[6px]">
            <Arrow up c="#8d9098" />
            <Arrow c="#8d9098" />
          </div>
        </div>
      </div>
    </div>
  );
}

function StatusBar() {
  return (
    <div className="flex h-[22px] shrink-0 items-center border-t-2 border-[#9a9da5] bg-gradient-to-b from-[#f1f2f5] to-[#bfc2c9] text-[10px] text-[#48494d]">
      <span className="flex h-full w-[69px] items-center border-r border-[#aaadb4] pl-[5px] whitespace-nowrap">Slide 3 of 23</span>
      <span className="flex h-full w-[55px] items-center justify-center border-r border-[#aaadb4]">"GxCare"</span>
      <span className="flex h-full w-[30px] items-center justify-center border-r border-[#aaadb4]">
        <Svg>
          <path d="M0 9l8-5 8 4-8 6z" fill="#7f9bd0" stroke="#4a68a5" /><path d="M2 9l6-3 5 2-5 4z" fill="#fff" />
          <path d="M8 1l6 8M14 0L9 9" stroke="#e03a2a" strokeWidth="2" />
        </Svg>
      </span>
      <div className="ml-auto flex h-full items-center pr-[3px]">
        <button aria-label="Normal view" className="flex h-[18px] w-[18px] items-center justify-center border border-[#d9a63a] bg-[#fbdc7c]">
          <Svg w={12} h={11}><rect x="0.500" y="0.500" width="11" height="9" fill="#fff" stroke="#555" /><path d="M4.500 1v9M5 7.500h6M1 3.500h3" stroke="#555" /></Svg>
        </button>
        <button aria-label="Slide sorter" className="ml-[5px]"><Svg w={12} h={11}><path d="M0.500 0.500h4v3h-4zM7.500 0.500h4v3h-4zM0.500 6.500h4v3h-4zM7.500 6.500h4v3h-4z" stroke="#555" /></Svg></button>
        <button aria-label="Reading view" className="ml-[6px]"><Svg w={12} h={11}><path d="M0.500 1.500c2-1 4-1 5.500 0 1.500-1 3.500-1 5.500 0v8c-2-1-4-1-5.500 0-1.500-1-3.500-1-5.500 0zM6 1.500v8M2 4h3M2 6h3M7 4h3M7 6h3" stroke="#555" strokeWidth="0.900" /></Svg></button>
        <button aria-label="Slide show" className="ml-[6px]"><Svg w={12} h={11}><path d="M0 0.500h12M1.500 1v4.500h9V1M6 5.500v3M3 10l3-2 3 2" stroke="#555" strokeWidth="1.200" /></Svg></button>
        <span className="ml-[9px] w-6">70%</span>
        <button aria-label="Zoom out" className="ml-[2px]"><Svg><circle cx="8" cy="8" r="7.300" fill="#f6f7f9" stroke="#777a82" /><path d="M4.500 8h7" stroke="#666" strokeWidth="1.800" /></Svg></button>
        <div className="relative flex h-4 w-[99px] items-center">
          <div className="h-px w-full bg-[#93969e]" />
          <input type="range" aria-label="Zoom" defaultValue={35} className="absolute inset-0 w-full cursor-pointer opacity-0" />
          <svg width="9" height="12" viewBox="0 0 9 12" className="pointer-events-none absolute left-[30px]" aria-hidden="true"><path d="M0.500 0.500h8v8L4.500 11.500 0.500 8.500z" fill="#f6f7f9" stroke="#777a82" /></svg>
        </div>
        <button aria-label="Zoom in"><Svg><circle cx="8" cy="8" r="7.300" fill="#f6f7f9" stroke="#777a82" /><path d="M4.500 8h7M8 4.500v7" stroke="#666" strokeWidth="1.800" /></Svg></button>
        <button aria-label="Fit to window" className="ml-[6px]"><Svg><rect x="0.500" y="0.500" width="15" height="15" rx="2" fill="#dcdde1" stroke="#777a82" /><path d="M8 2v4M8 10v4M2 8h4M10 8h4M3 3l2 2M13 3l-2 2M3 13l2-2M13 13l-2-2" stroke="#333" strokeWidth="1.300" /></Svg></button>
      </div>
    </div>
  );
}

/* ---------- Windows taskbar ---------- */

const B = ({ children, size = 24 }: { children: ReactNode; size?: number }) => (
  <svg width={size} height={size} viewBox="0 0 24 24" fill="none" aria-hidden="true">{children}</svg>
);

const SYSTEM: [string, ReactNode][] = [
  ["Start", <B><path d="M4 5.200l7-1v7.300H4zM12 4l8-1.200v8.700h-8zM4 12.500h7v7.300l-7-1zM12 12.500h8v8.700L12 20z" fill="#fff" /></B>],
  ["Search", <B><circle cx="14" cy="9.500" r="5.500" stroke="#e8ecee" strokeWidth="1.300" /><path d="M10 13.500L4 20" stroke="#e8ecee" strokeWidth="1.300" /></B>],
  ["Cortana", <B><circle cx="12" cy="12" r="7" stroke="#fff" strokeWidth="2" /></B>],
  ["Task View", <B><path d="M4.500 8.500h10v7h-10zM4.500 4v2.500h10V4M4.500 20v-2.500h10V20M18.500 4v16" stroke="#d8dee0" /><rect x="17" y="8" width="3" height="3" fill="#fff" /></B>],
];

const APPS: { name: string; icon: ReactNode; run?: boolean; multi?: boolean; active?: boolean }[] = [
  { name: "Microsoft Store", icon: <B><path d="M7.500 6V2.500a1.500 1.500 0 0 1 1.500-1.500h6a1.500 1.500 0 0 1 1.500 1.500V6" stroke="#f4f4f4" strokeWidth="1.300" /><path d="M0.500 6h23v16a1 1 0 0 1-1 1h-21a1 1 0 0 1-1-1z" fill="#f4f4f4" /><path d="M7.500 10.500h4v4h-4z" fill="#e8502e" /><path d="M12.500 10.500h4v4h-4z" fill="#6fae2a" /><path d="M7.500 15.500h4v4h-4z" fill="#1b8fe0" /><path d="M12.500 15.500h4v4h-4z" fill="#f6b51e" /></B> },
  { name: "Edge", run: true, icon: (
    <B>
      <defs><linearGradient id="edgeTop" x1="0" y1="0" x2="1" y2="0.400"><stop offset="0" stopColor="#2bb8e6" /><stop offset="0.600" stopColor="#2fcfc0" /><stop offset="1" stopColor="#5fdc5a" /></linearGradient></defs>
      <path d="M0.500 11C1 5 6 0.500 12 0.500c7 0 11.500 5 11.500 9.500 0 3.500-2.500 5.500-5.500 5.500-2.500 0-3.800-1-3.800-1.800 0-.7 1-1.200 1-3 0-2.500-2.700-4.700-6.200-4.700C4.500 6 1.500 9 0.500 11z" fill="url(#edgeTop)" />
      <path d="M0.500 11C2 8 5 6 9 6c3.500 0 6.200 2.200 6.200 4.700-.5-1.200-1.800-2-3.400-2C9.500 8.700 7 11 7 14.500c0 4.500 3.500 8 8 8.500-1 .4-2 .5-3 .5C5 23.500 0 17.500 0.500 11z" fill="#1673c9" />
      <path d="M7 14.500c0-3 1.500-4.800 3.200-5.400-.9 1-1.200 2.300-1.200 3.500 0 4 4 7 8 7 2 0 3.500-.5 4.800-1.300C20 21 17.500 22.800 15 23c-4.500-.5-8-4-8-8.500z" fill="#0f4c9a" />
    </B>) },
  { name: "File Explorer", run: true, multi: true, icon: <B><path d="M1 4.500h8l2 2h12v15H1z" fill="#f0b62c" /><path d="M1 8h22v12.500H1z" fill="#fbd56b" /><path d="M5 21v-7.500h14V21h-4v-4H9v4z" fill="#3f94dc" /></B> },
  { name: "Zoom", run: true, multi: true, icon: <B><rect width="24" height="24" rx="7" fill="#3f87f5" /><rect x="4" y="8" width="10.500" height="8.500" rx="2" fill="#fff" /><path d="M15.500 11l4.500-3v8.500l-4.500-3z" fill="#fff" /></B> },
  { name: "Security", run: true, icon: <B><path d="M2 2.500c6 0 8-2 10-2s4 2 10 2c.5 10-1.500 17-10 21C3.500 19.500 1.500 12.500 2 2.500z" fill="#e9e4e4" /><path d="M3.500 3.800c5 0 7-1.700 8.500-1.700s3.500 1.700 8.500 1.700c.2 8.400-1.500 14.300-8.500 18-7-3.700-8.700-9.600-8.500-18z" fill="#d22a22" /><path d="M7 7h10v9H7z" fill="#fff" /><path d="M7 10h10M7 13h10M10.500 7v3M14 10v3M10.500 13v3" stroke="#d22a22" strokeWidth="1.200" /></B> },
  { name: "Notepad++", run: true, icon: <B><path d="M3 3h15l2 3v16H3z" fill="#f4f6f0" stroke="#b7bbb0" /><path d="M4 2.500h13" stroke="#667" strokeDasharray="1 1" strokeWidth="2" /><path d="M4 21c0-8 3-12 8-12 4 0 7 4 7 12z" fill="#6bbf3a" /><path d="M6 12c2-3 4-2 4 0s-3 2-3 0M11 13c1-3 5-2 5 0s-4 3-5 0M5 17c3 2 5-2 8 0s4-1 5 0" stroke="#26401c" strokeWidth="1.200" /><path d="M23 2l-7 12-1 3 2.500-2z" fill="#e9ad3a" stroke="#805c1e" strokeWidth="0.600" /></B> },
  { name: "Internet Explorer", run: true, icon: <B><path d="M20.500 14.500H9c.2 2 1.600 3.500 3.700 3.500 1.400 0 2.500-.6 3.100-1.700h4.300C19 19.700 16.200 22 12.500 22 8 22 4.500 18.500 4.500 13.500S8 5 12.500 5c5 0 8.500 3.600 8 9.500zM9.100 11.500h7c-.2-1.800-1.500-3-3.400-3s-3.300 1.200-3.600 3z" fill="#57c5f3" /><path d="M3 22.500C0.500 20 4 12 10 6.500S21 0 22.300 2c.7 1 .2 3-.8 4.800 0-1.800-.3-2.800-1.500-3C17.500 3.500 12 7 8 12S2.500 20 3 22.500z" fill="#f2c531" /></B> },
  { name: "Chrome", run: true, multi: true, icon: <B size={23}><path d="M12 12L2.500 6.500A11 11 0 0 1 21.500 6.500z" fill="#e34133" /><path d="M12 12L2.500 6.500A11 11 0 0 0 12 23l5-8z" fill="#37a853" /><path d="M12 12h0l5 3-5 8a11 11 0 0 0 9.500-16.500H12z" fill="#fbc116" /><circle cx="12" cy="12" r="5.200" fill="#fff" /><circle cx="12" cy="12" r="4.100" fill="#4285f4" /></B> },
  { name: "Outlook", run: true, multi: true, icon: <B size={26}><rect x="0.500" y="0.500" width="19" height="19" fill="#fbe6a8" stroke="#e3a92c" /><ellipse cx="8" cy="9" rx="4.500" ry="5.500" stroke="#e6941e" strokeWidth="3" /><circle cx="18" cy="10" r="4" fill="#fff" stroke="#d9a63a" /><path d="M18 8v2h2" stroke="#a06f1a" /><path d="M10 12.500h13.500v9.500H10z" fill="#f6dc96" stroke="#b98d34" /><path d="M10 12.500l7 6 6.500-6" stroke="#b98d34" /></B> },
  { name: "PowerPoint", run: true, active: true, icon: <PptIcon size={23} /> },
  { name: "Java EE IDE", run: true, icon: <B><circle cx="12" cy="12" r="10" stroke="#dfe2e4" strokeWidth="3" strokeDasharray="2.600 2.630" /><circle cx="12" cy="12" r="8.500" fill="#20252c" stroke="#dfe2e4" strokeWidth="1.200" /><text x="12" y="12" fontSize="5" fontWeight="bold" textAnchor="middle" fill="#e0792c">Java EE</text><text x="12" y="17" fontSize="5" fontWeight="bold" textAnchor="middle" fill="#e0792c">IDE</text></B> },
];

function TaskBar() {
  return (
    <div className="flex h-[39px] shrink-0 items-stretch bg-gradient-to-r from-[#263d44] via-[#22364a] to-[#1a2542] text-white">
      <div className="grid w-[190px] shrink-0 grid-cols-4">
        {SYSTEM.map(([n, icon]) => (
          <button key={n} aria-label={n} className="flex items-center justify-center">{icon}</button>
        ))}
      </div>
      <div className="ml-[3px] grid w-[547px] shrink-0 grid-cols-11">
        {APPS.map((a) => (
          <button key={a.name} aria-label={a.name} className={"relative flex items-center justify-center " + (a.active ? "bg-[#4e5f70]" : "")}>
            {a.icon}
            {a.run && (
              <span className={"absolute bottom-0 flex h-[2px] " + (a.active ? "inset-x-0" : "inset-x-1")}>
                <span className="flex-1 bg-[#76b1e8]" />
                {a.multi && <span className="w-2 bg-[#5582ac]" />}
              </span>
            )}
          </button>
        ))}
      </div>
      <div className="ml-auto flex items-center border-r border-[#7f889b] pr-[18px]">
        <button aria-label="Show hidden icons"><Svg w={12} h={8}><path d="M0.500 7L6 1.500L11.500 7" stroke="#fff" /></Svg></button>
        <span className="ml-3"><Svg w={10} h={16}><rect x="2" y="0" width="6" height="11" rx="1" fill="#fff" /><path d="M0.500 8v4.500h9V8M5 12.500V16M3 15.500h4" stroke="#fff" /></Svg></span>
        <span className="ml-[11px]"><Svg w={17} h={14}><path d="M5 2.500h11v7H6M8 12.500h6M11 10v2M0.500 1.500h4v3h-4zM2.500 5v7h3" stroke="#fff" /></Svg></span>
        <span className="ml-[7px]"><Svg w={17} h={14}><rect x="5.500" y="4.500" width="10" height="7" fill="#fff" stroke="#fff" /><path d="M16.500 6.500v3M1.500 1v3M4.500 1v3M0.500 4.500h5v2l-2 1.500v3h2" stroke="#fff" /></Svg></span>
        <span className="ml-2"><Svg w={16} h={14}><path d="M0.500 4.500h3l4-3.500v12l-4-3.500h-3z" stroke="#fff" /><path d="M9.500 5c1 1 1 3 0 4M11.500 3.500c2 2 2 5 0 7M13.500 2c2.500 3 2.500 7 0 10" stroke="#fff" strokeWidth="0.900" /></Svg></span>
        <div className="ml-[5px] w-[62px] text-center text-[11px] leading-[18px] whitespace-nowrap"><div>7:40 PM</div><div>4/26/2021</div></div>
        <button aria-label="Notifications" className="relative ml-[17px]">
          <Svg w={18} h={18}><path d="M1 1h16v12H8l-3 4v-4H1z" fill="#fff" /><path d="M3.500 4.500h11M3.500 7.500h11M3.500 10.500h6" stroke="#1a2542" /></Svg>
          <span className="absolute top-2 left-2 flex size-4 items-center justify-center rounded-full border border-[#8b8f98] bg-[#2a2f3c] text-[10px] font-bold">1</span>
        </button>
      </div>
      <div className="w-[4px] shrink-0" />
    </div>
  );
}

/* ---------- meeting controls ---------- */

function Control({ icon, label, className = "" }: { icon: ReactNode; label: string; className?: string }) {
  return (
    <button className={"flex flex-col items-center gap-1 whitespace-nowrap " + className}>
      <span className="flex h-6 items-end">{icon}</span>
      <span>{label}</span>
    </button>
  );
}

function MeetingBar() {
  const g = "#a9a9a9";
  return (
    <div className="flex h-[53px] shrink-0 items-start bg-[#1a1a1a] pt-1 pr-3 text-[11px] leading-4 text-[#c4c4c4]">
      <Control className="ml-[15px] w-[60px]" label="Unmute" icon={
        <Svg w={24} h={24}><rect x="8" y="1" width="8" height="13" rx="4" fill={g} /><path d="M5.500 10.500c0 8 13 8 13 0M12 17v4M8 22h8" stroke={g} strokeWidth="1.600" /><path d="M1 23L23 1" stroke="#1a1a1a" strokeWidth="3" /><path d="M1 23L23 1" stroke="#e8464a" strokeWidth="1.500" /></Svg>} />
      <button aria-label="Audio options" className="mt-[6px]"><Chevron up /></button>
      <Control className="ml-[22px] w-[66px]" label="Start Video" icon={
        <Svg w={24} h={24}><rect x="0" y="5" width="17" height="15" rx="3" fill={g} /><path d="M18 10l6-4v13l-6-4z" fill={g} /><path d="M1 23L23 1" stroke="#1a1a1a" strokeWidth="3" /><path d="M1 23L23 1" stroke="#e8464a" strokeWidth="1.500" /></Svg>} />
      <button aria-label="Video options" className="mt-[6px] ml-px"><Chevron up /></button>
      <div className="ml-[382px] flex items-start">
        <button className="flex w-[72px] flex-col items-center gap-1">
          <span className="flex h-6 items-end gap-1 pl-4">
            <Svg w={24} h={22}><circle cx="7.500" cy="6" r="4" fill={g} /><circle cx="17.500" cy="8" r="3.500" fill={g} /><path d="M0 20c0-5 3-7 7.500-7s7.500 2 7.500 7c0 1-15 1-15 0zM16.500 20.700c0-3-.5-4.500-2-6 5-2 9.500 0 9.500 5 0 1-4 1-7.500 1z" fill={g} /></Svg>
            <span className="mt-[2px] self-start">10</span>
          </span>
          <span>Participants</span>
        </button>
        <button aria-label="Participant options" className="mt-[6px] ml-[13px]"><Chevron up /></button>
      </div>
      <Control className="ml-[28px] w-10" label="Chat" icon={<Svg w={20} h={22}><path d="M3 1.500h14a3 3 0 0 1 3 3v9a3 3 0 0 1-3 3H9L4.500 21v-4.500H3a3 3 0 0 1-3-3v-9a3 3 0 0 1 3-3z" fill={g} /></Svg>} />
      <Control className="ml-[30px] w-[76px] text-[#23d959]" label="Share Screen" icon={<Svg w={24} h={22}><rect y="2" width="24" height="18" rx="3" fill="#23d959" /><path d="M12 15.500V7M8.500 10L12 6.500l3.500 3.500" stroke="#1a1a1a" strokeWidth="1.800" /></Svg>} />
      <Control className="ml-[23px] w-[56px]" label="Reactions" icon={<Svg w={22} h={24}><circle cx="10" cy="13" r="9" fill={g} /><circle cx="6.800" cy="11" r="1.200" fill="#1a1a1a" /><circle cx="13.200" cy="11" r="1.200" fill="#1a1a1a" /><path d="M5.500 14c1 4 8 4 9 0z" stroke="#1a1a1a" strokeWidth="1.200" /><circle cx="18" cy="5" r="4.500" fill="#1a1a1a" /><path d="M18 2v6M15 5h6" stroke={g} strokeWidth="1.300" /></Svg>} />
      <button className="mt-[9px] ml-auto h-[27px] w-[61px] rounded-lg bg-[#b72425] text-[12px] font-bold text-white">Leave</button>
    </div>
  );
}

export default function App() {
  return (
    <div className="relative flex h-screen flex-col overflow-hidden bg-[#1a1a1a] font-['Open_Sans',sans-serif]">
      <div className="flex min-h-0 flex-1">
        <div className="flex w-[47px] shrink-0 flex-col pt-2 pl-2">
          <button aria-label="Meeting information" className="flex size-6 items-center justify-center rounded-md bg-[#242424]">
            <Svg w={14} h={14}><path d="M7 0.300l6 2v4.500c0 3.200-2.200 5.600-6 7-3.800-1.400-6-3.800-6-7V2.300z" fill="#23d959" /><path d="M4.300 6.900l2 2 3.600-3.700" stroke="#1a1a1a" strokeWidth="1.300" /></Svg>
          </button>
        </div>
        <main className="flex min-w-0 flex-1 flex-col bg-white">
          <TitleBar />
          <TabBar />
          <Ribbon />
          <Workspace />
          <StatusBar />
          <TaskBar />
        </main>
        <div className="w-12 shrink-0" />
      </div>
      <MeetingBar />
      <div className="absolute top-0 left-1/2 flex h-[22px] w-[382px] -translate-x-[199px] overflow-hidden rounded-b-md text-[11px] font-bold shadow">
        <div className="flex flex-1 items-center justify-center bg-[#23d959] whitespace-nowrap text-[#2d4a38]">You are viewing Omveer Ujjawal's screen</div>
        <button className="flex w-[121px] items-center justify-center gap-[6px] bg-[#222325] pl-4 whitespace-nowrap text-white">View Options<Chevron /></button>
      </div>
      <button className="absolute top-2 right-2 flex h-[26px] w-[55px] items-center gap-[6px] rounded-lg bg-[#808080]/20 pl-[7px] text-[11px] text-white">
        <Svg w={11} h={12}><path d="M0 0.500h3v2H0zM4 0.500h3v2H4zM8 0.500h3v2H8z" fill="#fff" /><rect y="4" width="11" height="7" fill="#fff" /></Svg>
        View
      </button>
    </div>
  );
}
